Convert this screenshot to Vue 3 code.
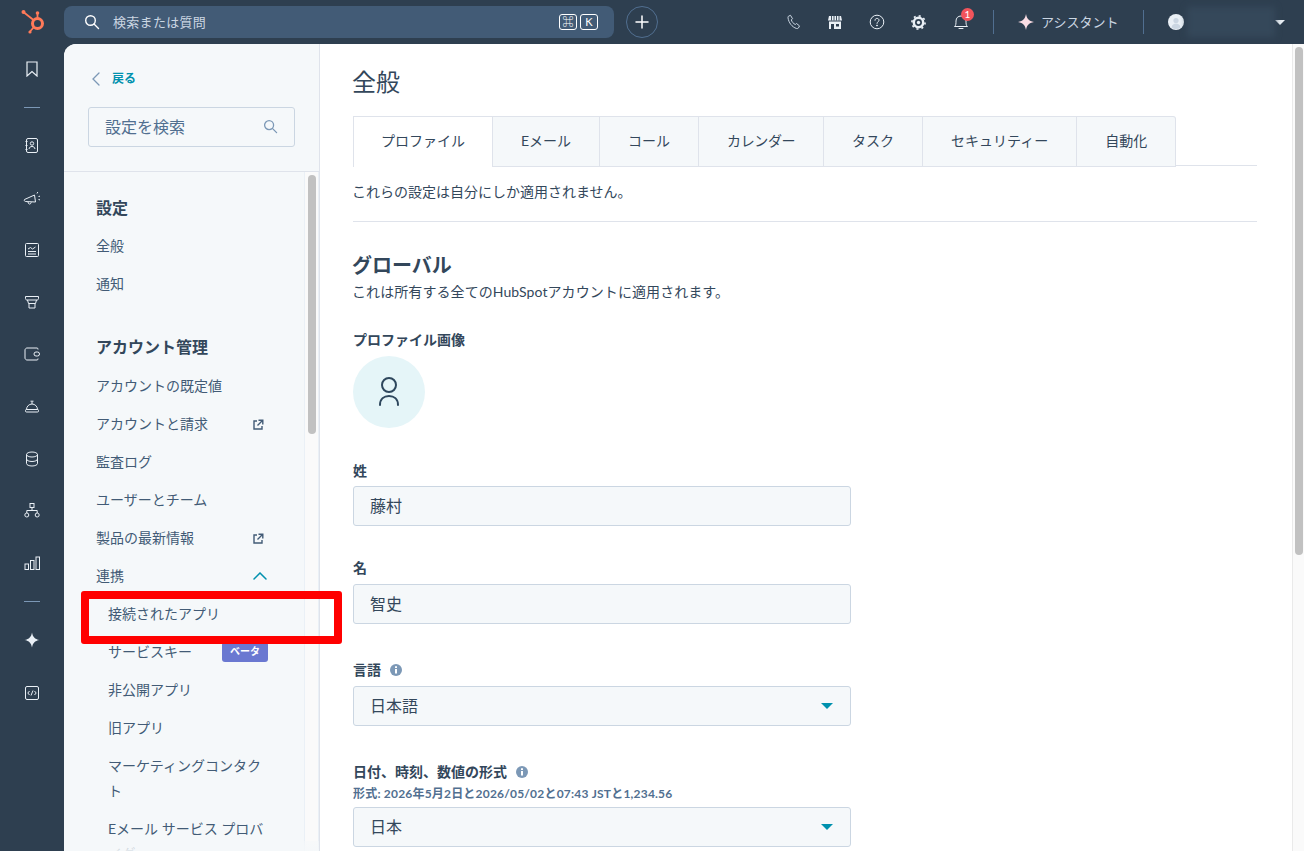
<script setup>
const railIcons = [
  'contacts', 'megaphone', 'report', 'store', 'wallet', 'bell', 'data', 'org', 'bars',
]

const tabs = ['プロファイル', 'Eメール', 'コール', 'カレンダー', 'タスク', 'セキュリティー', '自動化']
</script>

<template>
  <div class="app">
    <header class="topbar">
      <div class="logo-cell">
        <svg width="26" height="26" viewBox="0 0 26 26" fill="none">
          <circle cx="17.500" cy="14.500" r="5" stroke="#ff7a59" stroke-width="3" />
          <path d="M17.500 9V4M4 3.500l9.500 7.500M13.500 18.500l-3.500 4" stroke="#ff7a59" stroke-width="1.800" stroke-linecap="round" />
          <circle cx="17.500" cy="4" r="1.800" fill="#ff7a59" />
          <circle cx="3.500" cy="3" r="2" fill="#ff7a59" />
          <circle cx="10" cy="23" r="1.600" fill="#ff7a59" />
        </svg>
      </div>
      <div class="global-search">
        <svg class="search-ic" width="16" height="16" viewBox="0 0 16 16" fill="none" stroke="#fff" stroke-width="1.400">
          <circle cx="6.500" cy="6.500" r="4.800" />
          <path d="M10 10l4.500 4.500" stroke-linecap="round" />
        </svg>
        <span class="search-text">検索または質問</span>
        <span class="kbd">⌘</span>
        <span class="kbd kbd-k">K</span>
      </div>
      <button class="plus">
        <svg width="14" height="14" viewBox="0 0 14 14" stroke="#fff" stroke-width="1.500" stroke-linecap="round"><path d="M7 1v12M1 7h12" /></svg>
      </button>
      <div class="top-right">
        <svg class="tool" width="16" height="16" viewBox="0 0 16 16" fill="none" stroke="#cbd6e2" stroke-width="1">
          <path d="M2.500 2.200l2-.9 2 3.400-1.200 1.200c.6 2 2 3.600 4 4.600l1.200-1 3 2.400-1 2c-.4.600-1.300.8-2 .6C6 13 2.700 8.700 2 3.800c-.1-.6.100-1.300.5-1.600z" />
        </svg>
        <svg class="tool store-ic" width="14" height="15" viewBox="0 0 14 15">
          <path d="M1 1h12l1 4.500H0z" fill="#eaf0f6" />
          <path d="M3.500 1v4.500M6 1v4.500M8.500 1v4.500M11 1v4.500" stroke="#2e3f50" stroke-width=".9" />
          <path d="M1 6.500h12V14H1z" fill="#eaf0f6" />
          <path d="M3 9h3v5H3zM8 9h3v2.500H8z" fill="#2e3f50" />
        </svg>
        <svg class="tool" width="16" height="16" viewBox="0 0 16 16" fill="none" stroke="#eaf0f6" stroke-width="1">
          <circle cx="8" cy="8" r="6.800" />
          <path d="M6 6.300C6 5 7 4.400 8 4.400S10 5.100 10 6.200C10 7.800 8 7.800 8 9.400" stroke-linecap="round" />
          <circle cx="8" cy="11.500" r=".5" fill="#eaf0f6" />
        </svg>
        <svg class="tool" width="15" height="15" viewBox="0 0 16 16" fill="none">
          <circle cx="8" cy="8" r="5" stroke="#eaf0f6" stroke-width="2.600" />
          <circle cx="8" cy="8" r="7" stroke="#eaf0f6" stroke-width="1.800" stroke-dasharray="2.200 3.300" />
          <circle cx="8" cy="8" r="1.800" fill="#eaf0f6" />
        </svg>
        <span class="bell">
          <svg width="16" height="18" viewBox="0 0 16 18" fill="none" stroke="#eaf0f6" stroke-width="1">
            <path d="M1.500 13.500c1.500-1 1.500-3 1.500-5.500 0-3 2-5 5-5s5 2 5 5c0 2.500 0 4.500 1.500 5.500z" />
            <path d="M6 15.500h4" stroke-linecap="round" />
          </svg>
          <span class="badge">1</span>
        </span>
        <span class="divider first"></span>
        <span class="assistant">
          <svg width="16" height="16" viewBox="0 0 16 16"><path d="M8 0c.8 4.600 2.600 6.800 8 8-5.400 1.200-7.200 3.400-8 8-.8-4.600-2.600-6.800-8-8 5.400-1.200 7.200-3.400 8-8z" fill="#fbdde4" /></svg>
          アシスタント
        </span>
        <span class="divider"></span>
        <span class="avatar">
          <svg width="16" height="16" viewBox="0 0 16 16">
            <circle cx="8" cy="8" r="8" fill="#eaf0f6" />
            <circle cx="8" cy="6.500" r="2.600" fill="#cbd6e2" />
            <path d="M3.500 13.500c.5-3 2.500-4 4.500-4s4 1 4.500 4A8 8 0 0 1 3.500 13.500z" fill="#cbd6e2" />
          </svg>
        </span>
        <span class="blurred"></span>
        <span class="caret-white"></span>
      </div>
    </header>

    <div class="body">
      <nav class="rail">
        <svg class="rail-ic" width="14" height="16" viewBox="0 0 14 16" fill="none" stroke="#eaf0f6" stroke-width="1.200">
          <path d="M2 1h10v14l-5-4.500L2 15z" />
        </svg>
        <span class="rail-sep"></span>
        <template v-for="name in railIcons" :key="name">
          <svg class="rail-ic" :class="{ 'bell-ic': name === 'bell' }" width="18" height="18" viewBox="0 0 18 18" fill="none" stroke="#eaf0f6" stroke-width="1">
            <template v-if="name === 'contacts'">
              <rect x="3.500" y="1.500" width="11" height="14" rx="1.500" />
              <circle cx="9" cy="6.500" r="1.700" />
              <path d="M6 12c.5-2 1.500-2.500 3-2.500s2.500.5 3 2.500M2.500 4.500h2M2.500 8.500h2M2.500 12.500h2" />
            </template>
            <template v-else-if="name === 'megaphone'">
              <path d="M1.500 10.500l10-4.500 1 7-10-.5c-1 0-1.500-1-1-2z" />
              <path d="M5 13l.5 1.500c.4.800 2 .8 2.500-.5l.2-.8M14 4.500l.8-1.500M15.500 7.500l1.500-.3M15.500 10.500l1.500.4" />
            </template>
            <template v-else-if="name === 'report'">
              <rect x="2.500" y="2.500" width="13" height="13" rx="1" />
              <path d="M5 8l2.500-1.500 2 1.500 3-2M5 10.500h8M5 13h8" />
            </template>
            <template v-else-if="name === 'store'">
              <path d="M2.500 3.500h13v2c0 .8-.5 1.500-1.500 1.500H4c-1 0-1.500-.7-1.500-1.500z" />
              <path d="M4.500 7l1 3.500h7l1-3.500M6 10.500V15h6v-4.500" />
            </template>
            <template v-else-if="name === 'wallet'">
              <path d="M15 4.500V4c0-.6-.4-1-1-1H4C3 3 2 4 2 5v8c0 1 1 2 2 2h10c.6 0 1-.4 1-1v-.5" />
              <rect x="11" y="7" width="5.500" height="4" rx="2" />
            </template>
            <template v-else-if="name === 'bell'">
              <path d="M3.500 12.500C3.500 9.500 6 7 9 7s5.500 2.500 5.500 5.500zM9 7V4.500M7.500 4.200h3" />
              <rect x="2.500" y="12.500" width="13" height="2.500" rx="1" />
            </template>
            <template v-else-if="name === 'data'">
              <ellipse cx="9" cy="4.500" rx="5.500" ry="2.500" />
              <path d="M3.500 4.500v9c0 1.400 2.500 2.500 5.500 2.500s5.500-1.100 5.500-2.500v-9M3.500 9c0 1.400 2.500 2.500 5.500 2.500s5.500-1.100 5.500-2.500" />
            </template>
            <template v-else-if="name === 'org'">
              <rect x="7" y="1.500" width="4" height="4" />
              <circle cx="3.800" cy="13" r="2" />
              <circle cx="14.200" cy="13" r="2" />
              <path d="M9 5.500v3M3.800 11V8.500h10.400V11" />
            </template>
            <template v-else>
              <rect x="2" y="10" width="3.500" height="5.500" />
              <rect x="7.500" y="6.500" width="3.500" height="9" />
              <rect x="13" y="3" width="3.500" height="12.500" />
            </template>
          </svg>
        </template>
        <span class="rail-sep second"></span>
        <svg class="rail-ic spark" width="16" height="16" viewBox="0 0 16 16"><path d="M8 .5c.8 4.400 2.700 6.700 7.500 7.500-4.800.8-6.700 3.100-7.500 7.500C7.200 11.100 5.300 8.800.5 8 5.300 7.200 7.200 4.900 8 .5z" fill="#eaf0f6" /></svg>
        <svg class="rail-ic" width="16" height="16" viewBox="0 0 16 16" fill="none" stroke="#eaf0f6" stroke-width="1">
          <rect x="1.500" y="1.500" width="13" height="13" rx="1.500" />
          <path d="M5.500 6L3.800 8l1.700 2M10.500 6l1.700 2-1.700 2M9 5.500l-2 5" />
        </svg>
      </nav>

      <div class="sheet">
        <aside class="sidebar">
          <div class="side-head">
            <a class="back">
              <svg width="10" height="14" viewBox="0 0 10 14" fill="none" stroke="#7c98b6" stroke-width="1.300" stroke-linecap="round"><path d="M8 1L2 7l6 6" /></svg>
              戻る
            </a>
            <div class="side-search">
              <span>設定を検索</span>
              <svg width="15" height="15" viewBox="0 0 16 16" fill="none" stroke="#7c98b6" stroke-width="1.400">
                <circle cx="6.500" cy="6.500" r="4.800" />
                <path d="M10 10l4.500 4.500" stroke-linecap="round" />
              </svg>
            </div>
          </div>
          <div class="side-scroll">
            <div class="side-list">
              <h3>設定</h3>
              <a class="item">全般</a>
              <a class="item">通知</a>
              <h3 class="group2">アカウント管理</h3>
              <a class="item">アカウントの既定値</a>
              <a class="item">アカウントと請求
                <svg class="ext" width="12" height="12" viewBox="0 0 12 12" fill="none" stroke="#425b76" stroke-width="1.400"><path d="M5 2H2v8h8V7M6.500 1.200h4.300v4.300M10.500 1.500L5.500 6.500" /></svg>
              </a>
              <a class="item">監査ログ</a>
              <a class="item">ユーザーとチーム</a>
              <a class="item">製品の最新情報
                <svg class="ext" width="12" height="12" viewBox="0 0 12 12" fill="none" stroke="#425b76" stroke-width="1.400"><path d="M5 2H2v8h8V7M6.500 1.200h4.300v4.300M10.500 1.500L5.500 6.500" /></svg>
              </a>
              <a class="item">連携
                <svg class="ext up" width="14" height="8" viewBox="0 0 14 8" fill="none" stroke="#0091ae" stroke-width="1.500" stroke-linecap="round"><path d="M1 7l6-6 6 6" /></svg>
              </a>
              <a class="item sub">接続されたアプリ</a>
              <a class="item sub">サービスキー<span class="beta">ベータ</span></a>
              <a class="item sub">非公開アプリ</a>
              <a class="item sub">旧アプリ</a>
              <a class="item sub multi">マーケティングコンタクト</a>
              <a class="item sub multi">Eメール サービス プロバイダー</a>
            </div>
            <div class="side-track"><span class="side-thumb"></span></div>
            <div class="side-fade"></div>
          </div>
        </aside>

        <main class="content">
          <h1>全般</h1>
          <div class="tabs">
            <span v-for="(t, i) in tabs" :key="t" class="tab" :class="{ active: i === 0 }">{{ t }}</span>
          </div>
          <p class="note">これらの設定は自分にしか適用されません。</p>
          <hr />
          <h2>グローバル</h2>
          <p class="desc">これは所有する全てのHubSpotアカウントに適用されます。</p>

          <label class="lbl pic">プロファイル画像</label>
          <div class="pic-circle">
            <svg width="22" height="30" viewBox="0 0 22 30" fill="none" stroke="#2e475d" stroke-width="2">
              <circle cx="11" cy="8" r="7" />
              <path d="M2 28c0-6 4-9 9-9s9 3 9 9" stroke-linecap="round" />
            </svg>
          </div>

          <label class="lbl first-field">姓</label>
          <div class="field">藤村</div>
          <label class="lbl next">名</label>
          <div class="field">智史</div>
          <label class="lbl next lang">言語
            <svg class="info" width="12" height="12" viewBox="0 0 12 12"><circle cx="6" cy="6" r="6" fill="#7c98b6" /><path d="M5 5h2v4.500H5zM5 2.300h2v1.700H5z" fill="#fff" /></svg>
          </label>
          <div class="field select">日本語<span class="caret"></span></div>
          <label class="lbl next date">日付、時刻、数値の形式
            <svg class="info" width="12" height="12" viewBox="0 0 12 12"><circle cx="6" cy="6" r="6" fill="#7c98b6" /><path d="M5 5h2v4.500H5zM5 2.300h2v1.700H5z" fill="#fff" /></svg>
          </label>
          <p class="format">形式: 2026年5月2日と2026/05/02と07:43 JSTと1,234.56</p>
          <div class="field select after-format">日本<span class="caret"></span></div>
        </main>

        <div class="main-track"><span class="main-thumb"></span></div>
      </div>
    </div>

    <div class="highlight"></div>
  </div>
</template>

<style scoped>
.app {
  position: relative;
  width: 1304px;
  height: 851px;
  overflow: hidden;
  background: #2e3f50;
  font-family: Lato, "Noto Sans CJK JP", sans-serif;
  color: #33475b;
}

/* Top bar */
.topbar {
  height: 44px;
  display: flex;
  align-items: center;
}

.logo-cell {
  width: 64px;
  display: flex;
  justify-content: center;
  padding-left: 2px;
  box-sizing: border-box;
}

.global-search {
  width: 550px;
  height: 32px;
  background: #425b76;
  border-radius: 8px;
  display: flex;
  align-items: center;
  padding: 0 16px 0 20px;
  box-sizing: border-box;
  color: #cbd6e2;
  font-size: 13px;
}

.search-text {
  margin: -2px 0 0 13px;
  flex: 1;
  letter-spacing: 0.3px;
}

.kbd {
  width: 16px;
  height: 14px;
  border: 1px solid #fff;
  border-radius: 3px;
  font-size: 11px;
  line-height: 14px;
  text-align: center;
  color: #fff;
  box-sizing: content-box;
}

.kbd-k {
  margin-left: 3px;
}

.plus {
  width: 32px;
  height: 32px;
  margin-left: 12px;
  padding: 0;
  border: 1px solid #516f90;
  border-radius: 50%;
  background: none;
  display: flex;
  align-items: center;
  justify-content: center;
}

.top-right {
  position: relative;
  flex: 1;
  display: flex;
  align-items: center;
  height: 44px;
  padding-left: 128px;
  box-sizing: border-box;
  color: #cbd6e2;
}

.tool {
  margin-right: 26px;
  flex: none;
}

.store-ic {
  margin-right: 27px;
}

.bell {
  position: relative;
  display: flex;
  margin-left: 1px;
}

.badge {
  position: absolute;
  left: 8px;
  top: -5px;
  width: 13px;
  height: 13px;
  border-radius: 50%;
  background: #f2545b;
  color: #fff;
  font-size: 10px;
  line-height: 13px;
  text-align: center;
}

.divider {
  width: 1px;
  height: 24px;
  background: #516f90;
  margin: 0 24px 0 25px;
}

.divider.first {
  margin-left: 24px;
  margin-right: 24px;
}

.assistant {
  display: flex;
  align-items: center;
  gap: 7px;
  font-size: 13px;
  margin-top: -1px;
}

.avatar {
  display: flex;
}

.blurred {
  width: 88px;
  height: 30px;
  margin-left: 3px;
  background: #35485a;
  filter: blur(3px);
}

.caret-white {
  margin-left: 0;
  border-top: 5px solid #eaf0f6;
  border-left: 5px solid transparent;
  border-right: 5px solid transparent;
}

.body {
  display: flex;
  height: 807px;
}

/* Left rail */
.rail {
  width: 64px;
  flex: none;
  display: flex;
  flex-direction: column;
  align-items: center;
  padding-top: 17px;
  box-sizing: border-box;
}

.rail-ic {
  flex: none;
  margin-bottom: 34px;
}

.rail-ic.bell-ic {
  margin-bottom: 35px;
}

.rail-ic.spark {
  margin-bottom: 37px;
}

.rail-sep {
  width: 16px;
  height: 1px;
  background: #7c98b6;
  margin: -4px 0 29px;
}

.rail-sep.second {
  margin: -5px 0 30px;
}

/* Sheet */
.sheet {
  flex: 1;
  display: flex;
  background: #fff;
  border-top-left-radius: 12px;
  overflow: hidden;
}

.sidebar {
  width: 256px;
  flex: none;
  display: flex;
  flex-direction: column;
  background: #f5f8fa;
  border-right: 1px solid #dfe3eb;
  box-sizing: border-box;
}

.side-head {
  height: 128px;
  flex: none;
  padding: 27px 24px 0 24px;
  border-bottom: 1px solid #dfe3eb;
  box-sizing: border-box;
}

.back {
  display: flex;
  align-items: center;
  gap: 11px;
  padding-left: 3px;
  font-size: 12px;
  font-weight: 700;
  color: #0091ae;
  line-height: 16px;
}

.side-search {
  margin-top: 20px;
  height: 40px;
  display: flex;
  align-items: center;
  justify-content: space-between;
  padding: 0 16px 2px 16px;
  background: #f5f8fa;
  border: 1px solid #cbd6e2;
  border-radius: 3px;
  font-size: 16px;
  color: #516f90;
  box-sizing: border-box;
}

.side-scroll {
  position: relative;
  flex: 1;
  display: flex;
  min-height: 0;
  overflow: hidden;
}

.side-fade {
  position: absolute;
  left: 0;
  right: 0;
  bottom: 0;
  height: 10px;
  background: linear-gradient(rgba(245, 248, 250, 0.5), rgba(245, 248, 250, 0.9));
  pointer-events: none;
}

.side-list {
  width: 240px;
  flex: none;
  padding: 20px 0 0 32px;
  box-sizing: border-box;
}

.side-list h3 {
  margin: 0 0 3px;
  height: 32px;
  line-height: 32px;
  font-size: 16px;
  font-weight: 700;
  color: #33475b;
}

.side-list h3.group2 {
  margin: 28px 0 4px;
}

.item {
  position: relative;
  display: block;
  min-height: 38px;
  line-height: 38px;
  font-size: 14px;
  color: #425b76;
}

.ext {
  position: absolute;
  left: 156px;
  top: 14px;
}

.ext.up {
  left: 157px;
  top: 15px;
}

.sub {
  padding-left: 12px;
}

.multi {
  line-height: 25px;
  padding: 6px 32px 7px 12px;
  width: 164px;
  box-sizing: content-box;
}

.beta {
  position: absolute;
  left: 126px;
  top: 9px;
  width: 46px;
  height: 20px;
  border-radius: 3px;
  background: #6a78d1;
  color: #fff;
  font-size: 10px;
  font-weight: 700;
  line-height: 19px;
  text-align: center;
}

.side-track {
  width: 15px;
  flex: none;
  border-left: 1px solid #eaf0f6;
  border-right: 1px solid #eaf0f6;
  background: #fafafa;
  box-sizing: border-box;
  padding: 3px 3px 0;
}

.side-thumb {
  display: block;
  width: 8px;
  height: 259px;
  border-radius: 4px;
  background: #c1c1c1;
}

/* Main content */
.content {
  flex: 1;
  min-width: 0;
  padding: 20px 35px 0 33px;
}

.content h1 {
  margin: 0 0 0 -1px;
  font-size: 24px;
  line-height: 36px;
  font-weight: 400;
  color: #33475b;
}

.tabs {
  display: flex;
  margin-top: 16px;
  height: 50px;
  border-bottom: 1px solid #dfe3eb;
  box-sizing: border-box;
}

.tab {
  height: 49px;
  padding: 0 28px;
  line-height: 48px;
  font-size: 14px;
  background: #f5f8fa;
  border: 1px solid #dfe3eb;
  border-left: none;
  color: #33475b;
}

.tab.active {
  height: 50px;
  padding: 0 27px;
  background: #fff;
  border-left: 1px solid #dfe3eb;
  border-bottom: none;
}

.tab:nth-child(4) {
  letter-spacing: -0.4px;
}

.tab:last-child {
  border-top-right-radius: 3px;
}

.note {
  margin: 16px 0 0 -1px;
  font-size: 14px;
  line-height: 20px;
  color: #33475b;
}

.content hr {
  margin: 19px 0 0;
  border: none;
  border-top: 1px solid #dfe3eb;
}

.content h2 {
  margin: 28px 0 0 -1px;
  font-size: 20px;
  line-height: 30px;
  font-weight: 700;
  color: #33475b;
}

.desc {
  margin: 2px 0 0 -1px;
  font-size: 14px;
  line-height: 20px;
  letter-spacing: 0.08px;
}

.lbl {
  display: block;
  font-size: 14px;
  font-weight: 700;
  line-height: 20px;
  color: #33475b;
}

.lbl.pic {
  margin-top: 28px;
}

.pic-circle {
  width: 72px;
  height: 72px;
  margin-top: 6px;
  border-radius: 50%;
  background: #e5f5f8;
  display: flex;
  align-items: center;
  justify-content: center;
}

.first-field {
  margin: 33px 0 -1px;
}

.next {
  margin-top: 32px;
}

.lbl.lang {
  margin-top: 36px;
}

.lbl.date {
  margin-top: 36px;
}

.info {
  margin-left: 6px;
  vertical-align: -1px;
}

.field {
  position: relative;
  width: 498px;
  height: 40px;
  margin-top: 6px;
  padding: 0 16px;
  background: #f5f8fa;
  border: 1px solid #cbd6e2;
  border-radius: 3px;
  box-sizing: border-box;
  font-size: 16px;
  line-height: 38px;
  color: #33475b;
}

.field.after-format {
  margin-top: 4px;
}

.format {
  margin: 3px 0 0;
  font-size: 12px;
  font-weight: 700;
  line-height: 18px;
  letter-spacing: 0.2px;
  color: #516f90;
}

.caret {
  position: absolute;
  right: 17px;
  top: 16px;
  border-top: 6px solid #0091ae;
  border-left: 6px solid transparent;
  border-right: 6px solid transparent;
}

.main-track {
  width: 12px;
  flex: none;
  background: #fafafa;
  border-left: 1px solid #eaeaea;
  box-sizing: border-box;
  padding: 3px 2px 0;
}

.main-thumb {
  display: block;
  width: 8px;
  height: 508px;
  border-radius: 4px;
  background: #c1c1c1;
}

/* Red annotation drawn over the screenshot */
.highlight {
  position: absolute;
  left: 81px;
  top: 591px;
  width: 261px;
  height: 53px;
  border: 8px solid #f00;
  border-radius: 3px;
  box-sizing: border-box;
  pointer-events: none;
}
</style>

<style>
html, body {
  margin: 0;
  overflow: hidden;
}
</style>
